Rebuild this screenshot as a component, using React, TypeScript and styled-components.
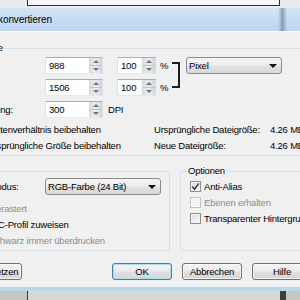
import React from "react";
import styled, { createGlobalStyle, css } from "styled-components";

const GlobalStyle = createGlobalStyle`
  html, body {
    margin: 0;
    padding: 0;
  }
  body {
    width: 300px;
    height: 300px;
    overflow: hidden;
    font-family: "Liberation Sans", Arial, sans-serif;
    font-size: 9.5px;
    letter-spacing: -0.2px;
    color: #000;
  }
`;

const Screen = styled.div`
  width: 300px;
  height: 300px;
  overflow: hidden;
  display: flex;
  flex-direction: column;
  background: #cfcfcf;
`;

const TopStrip = styled.div`
  height: 8px;
  flex: none;
  display: flex;
  align-items: flex-start;
  background: #e9ebee;
`;

const BackTab = styled.div`
  margin-left: 27px;
  width: 253px;
  height: 6px;
  box-sizing: border-box;
  border: 1px solid #2f2f2f;
  border-top: none;
  background: #f6f6f6;
`;

const Window = styled.div`
  flex: none;
  margin-left: -60px;
  width: 382px;
  padding-bottom: 4px;
  background: linear-gradient(#c9dff2, #bcd6ea);
`;

const TitleBar = styled.div`
  position: relative;
  height: 23px;
  display: flex;
  align-items: center;
  padding-left: 14px;
  font-size: 10px;
  letter-spacing: -0.1px;
  background: linear-gradient(#d3e5f6 0%, #c6ddf3 45%, #bcd6f0 100%);
`;

const GlassShade = styled.span`
  position: absolute;
  left: 338px;
  top: 0;
  width: 9px;
  height: 100%;
  background: linear-gradient(90deg, rgba(90, 110, 130, 0), rgba(90, 108, 126, 0.55), rgba(90, 110, 130, 0));
`;

const Body = styled.div`
  display: flex;
  flex-direction: column;
  padding: 10px 10px 7px 20px;
  background: #f0f0f0;
  border-top: 1px solid #f9fbfd;
`;

const Group = styled.fieldset<{ $w?: number }>`
  margin: 0;
  min-width: 0;
  box-sizing: border-box;
  padding: 0 6px 2px 9px;
  border: 1px solid #d5dfe5;
  border-radius: 3px;
  ${(p) =>
    p.$w
      ? css`
          width: ${p.$w}px;
          flex: none;
        `
      : css`
          flex: 1;
        `}
`;

const Legend = styled.legend<{ $shift?: number }>`
  margin-left: ${(p) => -3 - (p.$shift ?? 0)}px;
  padding: 0 1px;
  line-height: 12px;
`;

const SizeGrid = styled.div`
  display: grid;
  grid-template-columns: 75px 72px 43px 10px 16px 96px;
  grid-template-rows: 17px 17px 17px;
  row-gap: 5px;
  align-items: center;
  padding-top: 3px;
`;

const Label = styled.span<{ $row: number }>`
  grid-column: 1;
  grid-row: ${(p) => p.$row};
  white-space: nowrap;
`;

const Cell = styled.div<{ $col: string; $row: string }>`
  grid-column: ${(p) => p.$col};
  grid-row: ${(p) => p.$row};
  display: flex;
  align-items: center;
  gap: 5px;
  white-space: nowrap;
`;

const NumberBox = styled.div<{ $w: number }>`
  width: ${(p) => p.$w}px;
  height: 17px;
  box-sizing: border-box;
  display: flex;
  background: #fff;
  border: 1px solid;
  border-color: #abadb3 #dbdfe6 #e3e9ef #e2e3ea;
`;

const NumberText = styled.span`
  flex: 1;
  padding-left: 3px;
  line-height: 15px;
`;

const Spin = styled.div`
  width: 13px;
  display: flex;
  flex-direction: column;
  background: linear-gradient(90deg, #d9dadc, #eceded 50%, #d4d5d8);
`;

const SpinHalf = styled.div<{ $down?: boolean }>`
  flex: 1;
  display: flex;
  align-items: center;
  justify-content: center;
  border-bottom: ${(p) => (p.$down ? "none" : "1px solid #c3c6cc")};

  &::after {
    content: "";
    border-left: 3px solid transparent;
    border-right: 3px solid transparent;
    ${(p) =>
      p.$down
        ? "border-top: 3px solid #6b7588;"
        : "border-bottom: 3px solid #6b7588;"}
  }
`;

const Bracket = styled.div`
  grid-column: 5;
  grid-row: 1 / 3;
  align-self: start;
  margin: 5px 0 0 2px;
  width: 8px;
  height: 26px;
  box-sizing: border-box;
  border: 2px solid #1c1c1c;
  border-left: none;
`;

const Combo = styled.div<{ $w: number }>`
  width: ${(p) => p.$w}px;
  height: 17px;
  box-sizing: border-box;
  display: flex;
  align-items: center;
  justify-content: space-between;
  padding: 0 4px 0 2px;
  border: 1px solid #8a8a8a;
  border-radius: 3px;
  background: linear-gradient(#f4f4f4 0%, #ececec 50%, #e1e1e1 51%, #d9d9d9 100%);
  white-space: nowrap;

  &::after {
    content: "";
    border-left: 4px solid transparent;
    border-right: 4px solid transparent;
    border-top: 4px solid #111;
  }
`;

const InfoGrid = styled.div`
  display: grid;
  grid-template-columns: 184px 116px auto;
  grid-auto-rows: 16px;
  align-items: center;
  margin-top: 3px;
  white-space: nowrap;
`;

const GroupRow = styled.div`
  display: flex;
  gap: 10px;
  margin-top: 9px;
`;

const ModeRow = styled.div`
  display: grid;
  grid-template-columns: 75px auto;
  align-items: center;
  height: 17px;
  margin-top: 1px;
  white-space: nowrap;
`;

const CheckList = styled.div<{ $top: number }>`
  display: flex;
  flex-direction: column;
  margin-top: ${(p) => p.$top}px;
`;

const CheckRow = styled.div<{ $disabled?: boolean; $indent?: number }>`
  display: flex;
  align-items: center;
  gap: 3px;
  height: 16px;
  padding-left: ${(p) => p.$indent ?? 0}px;
  white-space: nowrap;
  color: ${(p) => (p.$disabled ? "#8d8d8d" : "#000")};
`;

const Box = styled.span<{ $disabled?: boolean }>`
  width: 11px;
  height: 11px;
  box-sizing: border-box;
  flex: none;
  display: flex;
  align-items: center;
  justify-content: center;
  border: 1px solid ${(p) => (p.$disabled ? "#c3c3c3" : "#8e8f8f")};
  background: ${(p) =>
    p.$disabled ? "#f4f4f4" : "linear-gradient(135deg, #d9dadc, #f9f9f9)"};
  box-shadow: inset 0 0 0 1px ${(p) => (p.$disabled ? "#f7f7f7" : "#f2f2f2")};
`;

const ButtonRow = styled.div`
  display: flex;
  align-items: center;
  gap: 10px;
  margin-top: 12px;
`;

const Button = styled.button<{ $w: number; $primary?: boolean; $push?: boolean }>`
  width: ${(p) => p.$w}px;
  height: 17px;
  box-sizing: border-box;
  padding: 0;
  font: inherit;
  letter-spacing: inherit;
  color: #000;
  border: 1px solid #707070;
  border-radius: 3px;
  background: linear-gradient(#f3f3f3 0%, #ececec 48%, #dfdfdf 52%, #d6d6d6 100%);
  box-shadow: inset 0 0 0 1px rgba(255, 255, 255, 0.75);
  ${(p) => p.$push && "margin-left: auto;"}
  ${(p) =>
    p.$primary &&
    css`
      border-color: #3c7fb1;
      box-shadow: inset 0 0 0 1px #a9dcf5;
    `}
`;

const BottomStrip = styled.div`
  flex: 1;
  display: flex;
  background: #c6c6c6;
`;

const BackPane = styled.div`
  margin-left: 27px;
  width: 252px;
  border-left: 1px solid #3a3a3a;
  background: #d7d7d7;
`;

const BackBar = styled.div`
  width: 6px;
  background: #3d3d3d;
`;

const Check = ({
  checked,
  disabled,
  indent,
  label,
}: {
  checked?: boolean;
  disabled?: boolean;
  indent?: number;
  label: string;
}) => (
  <CheckRow $disabled={disabled} $indent={indent}>
    <Box $disabled={disabled}>
      {checked && (
        <svg width="9" height="9" viewBox="0 0 9 9">
          <path d="M1.3 4.6 L3.5 7.2 L7.8 1.4" fill="none" stroke="#333b48" strokeWidth="1.5" />
        </svg>
      )}
    </Box>
    {label}
  </CheckRow>
);

const NumField = ({ w, value }: { w: number; value: string }) => (
  <NumberBox $w={w}>
    <NumberText>{value}</NumberText>
    <Spin>
      <SpinHalf />
      <SpinHalf $down />
    </Spin>
  </NumberBox>
);

const App: React.FC = () => {
  return (
    <>
      <GlobalStyle />
      <Screen>
        <TopStrip>
          <BackTab />
        </TopStrip>
        <Window>
          <TitleBar>
            In Bitmap konvertieren
            <GlassShade />
          </TitleBar>
          <Body>
            <Group>
              <Legend $shift={4}>Bildgröße</Legend>
              <SizeGrid>
                <Label $row={1}>Breite:</Label>
                <Cell $col="2" $row="1">
                  <NumField w={58} value="988" />
                </Cell>
                <Cell $col="3" $row="1">
                  <NumField w={39} value="100" />
                </Cell>
                <Cell $col="4" $row="1">%</Cell>
                <Label $row={2}>Höhe:</Label>
                <Cell $col="2" $row="2">
                  <NumField w={58} value="1506" />
                </Cell>
                <Cell $col="3" $row="2">
                  <NumField w={39} value="100" />
                </Cell>
                <Cell $col="4" $row="2">%</Cell>
                <Bracket />
                <Cell $col="6" $row="1">
                  <Combo $w={96}>Pixel</Combo>
                </Cell>
                <Label $row={3}>Auflösung:</Label>
                <Cell $col="2 / 4" $row="3">
                  <NumField w={58} value="300" />
                  DPI
                </Cell>
              </SizeGrid>
              <InfoGrid>
                <Check checked indent={3} label="Seitenverhältnis beibehalten" />
                <span>Ursprüngliche Dateigröße:</span>
                <span>4.26 MB</span>
                <Check indent={3} label="Ursprüngliche Größe beibehalten" />
                <span>Neue Dateigröße:</span>
                <span>4.26 MB</span>
              </InfoGrid>
            </Group>
            <GroupRow>
              <Group $w={210}>
                <Legend>Farbe</Legend>
                <ModeRow>
                  <span>Farbmodus:</span>
                  <Combo $w={116}>RGB-Farbe (24 Bit)</Combo>
                </ModeRow>
                <CheckList $top={5}>
                  <Check disabled indent={5} label="Gerastert" />
                  <Check indent={5} label="ICC-Profil zuweisen" />
                  <Check disabled indent={5} label="Schwarz immer überdrucken" />
                </CheckList>
              </Group>
              <Group>
                <Legend>Optionen</Legend>
                <CheckList $top={1}>
                  <Check checked label="Anti-Alias" />
                  <Check disabled label="Ebenen erhalten" />
                  <Check label="Transparenter Hintergrund" />
                </CheckList>
              </Group>
            </GroupRow>
            <ButtonRow>
              <Button $w={62}>Zurücksetzen</Button>
              <Button $w={60} $primary $push>
                OK
              </Button>
              <Button $w={60}>Abbrechen</Button>
              <Button $w={60}>Hilfe</Button>
            </ButtonRow>
          </Body>
        </Window>
        <BottomStrip>
          <BackPane />
          <BackBar />
        </BottomStrip>
      </Screen>
    </>
  );
};

export default App;
